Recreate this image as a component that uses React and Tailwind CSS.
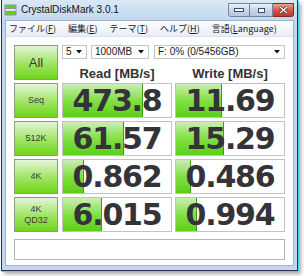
import React from 'react';

const ROWS = [
  { label: ['Seq'], read: '473.8', write: '11.69', rw: 80, ww: 46 },
  { label: ['512K'], read: '61.57', write: '15.29', rw: 61, ww: 48 },
  { label: ['4K'], read: '0.862', write: '0.486', rw: 21, ww: 15 },
  { label: ['4K', 'QD32'], read: '6.015', write: '0.994', rw: 39, ww: 21 },
];

const MENU = [
  { text: 'ファイル', key: 'F' },
  { text: '編集', key: 'E' },
  { text: 'テーマ', key: 'T' },
  { text: 'ヘルプ', key: 'H' },
  { text: '言語', key: 'L', rest: 'anguage' },
];

const greenBtn =
  'border border-[#8d9c86] bg-[linear-gradient(#e3f5d8,#a4e66c_50%,#6fd515)] text-[#3c3c3c] flex flex-col items-center justify-center leading-[11px]';

const AppIcon = () => (
  <svg width="13" height="12" viewBox="0 0 13 12">
    <rect x="0.5" y="0.5" width="12" height="11" rx="1" fill="#8c969e" />
    <rect x="1.5" y="1.5" width="10" height="2.5" fill="#5fd21e" />
    <rect x="1.5" y="5" width="10" height="2" fill="#e6eaee" />
    <rect x="1.5" y="8" width="10" height="2.5" fill="#5fd21e" />
  </svg>
);

const Arrow = () => (
  <svg width="6" height="4" viewBox="0 0 6 4" className="shrink-0">
    <path d="M0 0h6L3 3.5z" fill="#111" />
  </svg>
);

const Combo = ({ w, text }) => (
  <div className={`${w} h-[14px] border border-[#c4c4c4] bg-white flex items-center justify-between pl-[3px] pr-[4px] text-[10px] text-[#1a1a1a]`}>
    <span className="leading-none">{text}</span>
    <Arrow />
  </div>
);

const ValueBox = ({ value, width }) => (
  <div className="relative w-[110px] h-[35px] border border-[#c2c2c2] bg-white overflow-hidden">
    <div
      className="absolute left-0 top-0 bottom-0 border-r border-[#3d9d14] bg-[linear-gradient(#cbeeb6,#82e044_50%,#5ccf16)]"
      style={{ width }}
    />
    <div className="relative h-full flex items-center justify-center font-['DejaVu_Sans',sans-serif] font-bold text-[30px] tracking-[-1.2px] leading-none text-[#333338]">
      {value}
    </div>
  </div>
);

export default function App() {
  return (
    <div className="w-[304px] h-[276px] bg-white overflow-hidden font-['Liberation_Sans','Noto_Sans_CJK_JP',sans-serif]">
      <div className="ml-px w-[297px] h-[271px] flex flex-col border-x border-b border-[#2a3340] bg-[#c2d6ed] shadow-[1px_1px_0_#54cfe0,3px_3px_4px_rgba(0,0,0,0.35)]">
        {/* Title bar */}
        <div className="h-[20px] shrink-0 flex items-start bg-[linear-gradient(#dbe8f6,#c3d7ee)]">
          <div className="pl-[2px] pt-[4px]">
            <AppIcon />
          </div>
          <span className="ml-[4px] mt-[4px] text-[10px] leading-[12px] text-[#111]">CrystalDiskMark 3.0.1</span>
          <div className="ml-auto mr-[3px] mt-[3px] flex">
            <div className="w-[22px] h-[14px] border border-[#6f84a0] rounded-bl-[3px] bg-[linear-gradient(#eaf1fa,#c5d6eb_50%,#b3c8e2)] flex items-center justify-center">
              <div className="w-[8px] h-[2px] bg-white border border-[#3c4c66] box-content" />
            </div>
            <div className="w-[23px] h-[14px] border-y border-r border-[#6f84a0] bg-[linear-gradient(#eaf1fa,#c5d6eb_50%,#b3c8e2)] flex items-center justify-center">
              <div className="w-[7px] h-[5px] border border-[#3c4c66] bg-white" />
            </div>
            <div className="w-[21px] h-[14px] border-y border-r border-[#7a2a22] rounded-br-[3px] bg-[linear-gradient(#eba595,#d2594a_50%,#c0392c)] flex items-center justify-center">
              <svg width="9" height="8" viewBox="0 0 9 8">
                <path d="M1 1l7 6M8 1L1 7" stroke="#3a1410" strokeWidth="2.6" />
                <path d="M1 1l7 6M8 1L1 7" stroke="#fff" strokeWidth="1.6" />
              </svg>
            </div>
          </div>
        </div>

        {/* Client */}
        <div className="mx-[3px] mb-[4px] flex-1 flex flex-col bg-white border border-[#9fb4cc]">
          {/* Menu */}
          <div className="h-[16px] shrink-0 flex items-center gap-[10px] pl-[2px] bg-[linear-gradient(#fafcfe,#e9eef6)] border-b border-[#d9e2ee] text-[9px] text-[#1a1a1a] font-['Noto_Sans_CJK_JP',sans-serif]">
            {MENU.map((m) => (
              <span key={m.key} className="px-px leading-none">
                {m.text}(<u>{m.key}</u>{m.rest || ''})
              </span>
            ))}
          </div>

          {/* Main area */}
          <div className="pt-[8px] pl-[8px] flex flex-col gap-[3px]">
            <div className="flex h-[35px]">
              <div className={`${greenBtn} w-[44px] h-[35px] mr-[4px] text-[13px]`}>All</div>
              <div className="w-[223px] flex flex-col">
                <div className="flex">
                  <Combo w="w-[25px] mr-[4px]" text="5" />
                  <Combo w="w-[58px] mr-[5px]" text="1000MB" />
                  <Combo w="w-[131px]" text="F: 0% (0/5456GB)" />
                </div>
                <div className="flex mt-[8px] text-[13px] font-bold text-[#333] leading-[13px]">
                  <div className="w-[110px] mr-[3px] text-center">Read [MB/s]</div>
                  <div className="w-[110px] text-center">Write [MB/s]</div>
                </div>
              </div>
            </div>

            {ROWS.map((r) => (
              <div key={r.read} className="flex h-[35px]">
                <div className={`${greenBtn} w-[44px] h-[35px] mr-[4px] text-[9px]`}>
                  {r.label.map((l) => (
                    <span key={l}>{l}</span>
                  ))}
                </div>
                <div className="mr-[3px]">
                  <ValueBox value={r.read} width={r.rw} />
                </div>
                <ValueBox value={r.write} width={r.ww} />
              </div>
            ))}

            <div className="mt-[4px] w-[271px] h-[21px] border border-[#b4b4b4] bg-white" />
          </div>
        </div>
      </div>
    </div>
  );
}
